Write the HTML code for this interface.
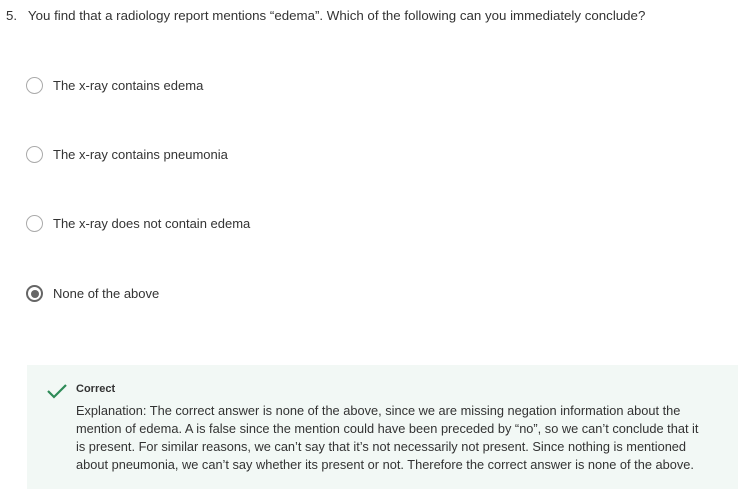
<!DOCTYPE html>
<html><head><style>
body{margin:0;width:738px;height:489px;background:#fff;font-family:"Liberation Sans",sans-serif;color:#333;position:relative;overflow:hidden}
.q{position:absolute;left:6px;top:8px;font-size:13.3px;color:#333}
.opt{position:absolute;left:26px;font-size:13px;color:#333;display:flex;align-items:center}
.r{width:17px;height:17px;border:1.5px solid #aaa;border-radius:50%;box-sizing:border-box;margin-right:10px;position:relative}
.r.s{border:2px solid #666}
.r.s:after{content:"";position:absolute;left:2.5px;top:2.5px;width:8px;height:8px;border-radius:50%;background:#666}
.fb{position:absolute;left:27px;top:365px;width:711px;height:124px;background:#f2f8f5}
.fb .t{position:absolute;left:49px;top:18px;font-size:11px;font-weight:bold;color:#333}
.fb .e{position:absolute;left:49px;top:37px;width:634px;font-size:12.8px;line-height:18px;color:#333}
</style></head><body>
<div class="q">5.&nbsp;&nbsp; You find that a radiology report mentions “edema”. Which of the following can you immediately conclude?</div>
<div class="opt" style="top:77px"><div class="r"></div>The x-ray contains edema</div>
<div class="opt" style="top:146px"><div class="r"></div>The x-ray contains pneumonia</div>
<div class="opt" style="top:215px"><div class="r"></div>The x-ray does not contain edema</div>
<div class="opt" style="top:285px"><div class="r s"></div>None of the above</div>
<div class="fb">
<svg style="position:absolute;left:19px;top:18px" width="22" height="16" viewBox="0 0 22 16"><path d="M2 8 L8 14 L20 2" fill="none" stroke="#2e8b57" stroke-width="2.2"/></svg>
<div class="t">Correct</div>
<div class="e">Explanation: The correct answer is none of the above, since we are missing negation information about the mention of edema. A is false since the mention could have been preceded by “no”, so we can’t conclude that it is present. For similar reasons, we can’t say that it’s not necessarily not present. Since nothing is mentioned about pneumonia, we can’t say whether its present or not. Therefore the correct answer is none of the above.</div>
</div>
</body></html>
